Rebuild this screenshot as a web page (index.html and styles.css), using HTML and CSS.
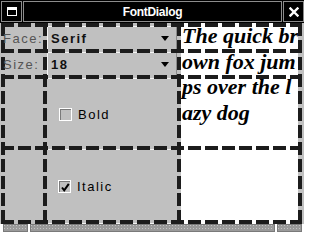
FILE: index.html
```html
<!DOCTYPE html>
<html>
<head>
<meta charset="utf-8">
<title>FontDialog</title>
<link rel="stylesheet" href="styles.css">
</head>
<body>
<div class="window">
  <div class="titlebar">
    <div class="tb-box tb-icon">
      <svg width="10" height="9" viewBox="0 0 10 9"><rect x="0.5" y="0.5" width="9" height="8" fill="none" stroke="#fff"/><rect x="0" y="0" width="10" height="3" fill="#fff"/></svg>
    </div>
    <div class="tb-box tb-title">FontDialog</div>
    <div class="tb-box tb-close">
      <svg width="10" height="10" viewBox="0 0 10 10"><path d="M1.5 1.5L8.5 8.5M8.5 1.5L1.5 8.5" stroke="#fff" stroke-width="2.4" stroke-linecap="square"/></svg>
    </div>
  </div>
  <div class="panel">
    <div class="label face-label">Face:</div>
    <div class="choice face-choice"><span class="choice-text">Serif</span><span class="arrow"></span></div>
    <div class="label size-label">Size:</div>
    <div class="choice size-choice"><span class="choice-text">18</span><span class="arrow"></span></div>
    <div class="check bold-check"><span class="box"></span><span class="check-text">Bold</span></div>
    <div class="check italic-check"><span class="box"><svg width="10" height="10" viewBox="0 0 10 10"><path d="M2 5.5L4.2 8.3L8.8 1.8" fill="none" stroke="#000" stroke-width="2"/></svg></span><span class="check-text">Italic</span></div>
    <div class="preview">
      <div class="pline">The quick br</div>
      <div class="pline">own fox jum</div>
      <div class="pline">ps over the l</div>
      <div class="pline">azy dog</div>
    </div>
    <div class="hline h1"></div>
    <div class="hline h2"></div>
    <div class="hline h3"></div>
    <div class="hline h4"></div>
    <div class="hline h5"></div>
    <div class="vline v1"></div>
    <div class="vline v2"></div>
    <div class="vline v3"></div>
    <div class="vline v4"></div>
  </div>
  <div class="hscroll">
    <div class="seg seg-l"></div>
    <div class="seg seg-m"></div>
    <div class="seg seg-r"></div>
  </div>
</div>
</body>
</html>
```
FILE: styles.css
```css
html, body {
  margin: 0;
  padding: 0;
  background: #ffffff;
}

.window {
  width: 304px;
  height: 233px;
  background: #c0c0c0;
  display: flex;
  flex-direction: column;
  overflow: hidden;
}

.titlebar {
  height: 23px;
  box-sizing: border-box;
  background: #000;
  padding: 1px 0 1px 1px;
  display: flex;
  gap: 1px;
}

.tb-box {
  box-sizing: border-box;
  height: 21px;
  border: 1px solid #8c8c8c;
  display: flex;
  align-items: center;
  justify-content: center;
}

.tb-icon, .tb-close {
  width: 21px;
}

.tb-title {
  flex: 1;
  color: #fff;
  font-family: "Liberation Sans", Arial, sans-serif;
  font-weight: bold;
  font-size: 12px;
  letter-spacing: -0.3px;
}

.panel {
  display: grid;
  grid-template-columns: 4px 38px 4px 130px 4px 117px 4px;
  grid-template-rows: 4px 22px 4px 22px 4px 67px 4px 70px 4px;
  padding-left: 1px;
  background: #c0c0c0;
}

.label {
  grid-column: 1 / 3;
  z-index: 2;
  display: flex;
  align-items: center;
  padding-left: 2px;
  font-family: "Liberation Sans", Arial, sans-serif;
  font-size: 13px;
  letter-spacing: 1.5px;
  color: #555555;
}

.face-label { grid-row: 2; }
.size-label { grid-row: 4; }

.choice {
  grid-column: 4;
  display: flex;
  align-items: center;
  justify-content: space-between;
  padding: 0 7px 0 3px;
  border-left: 1px solid #f4f4f4;
  border-right: 1px solid #8a8a8a;
  font-family: "Liberation Sans", Arial, sans-serif;
  font-weight: bold;
  font-size: 13px;
  letter-spacing: 1.5px;
  color: #111;
}

.face-choice { grid-row: 2; }
.size-choice { grid-row: 4; }

.arrow {
  width: 0;
  height: 0;
  border-left: 4.5px solid transparent;
  border-right: 4.5px solid transparent;
  border-top: 5px solid #000;
}

.check {
  grid-column: 4;
  display: flex;
  align-items: center;
  gap: 6px;
  padding-left: 12px;
  font-family: "Liberation Sans", Arial, sans-serif;
  font-size: 13px;
  letter-spacing: 1.5px;
  color: #000;
}

.bold-check { grid-row: 6; padding-top: 3px; }
.italic-check { grid-row: 8; padding-left: 11px; padding-top: 3px; }

.box {
  box-sizing: border-box;
  width: 13px;
  height: 13px;
  border: 1px solid #fff;
  box-shadow: inset 1px 1px 0 #7a7a7a;
  background: #c0c0c0;
  display: flex;
  align-items: center;
  justify-content: center;
}

.preview {
  grid-column: 6;
  grid-row: 1 / 10;
  background: #fff;
  padding: 0 0 0 1px;
  overflow: hidden;
}

.pline {
  font-family: "Liberation Serif", "Times New Roman", serif;
  font-style: italic;
  font-weight: bold;
  font-size: 22px;
  line-height: 25.5px;
  white-space: nowrap;
  color: #000;
}

.hline {
  grid-column: 1 / -1;
  z-index: 1;
  background:
    repeating-linear-gradient(to right, #1c1c1c 0 13px, transparent 13px 17px),
    linear-gradient(#f4f4f4, #f4f4f4) 46px 100% / 130px 1px no-repeat;
}

.h1 { grid-row: 1; }
.h2 { grid-row: 3; }
.h3 { grid-row: 5; }
.h4 { grid-row: 7; }
.h5 { grid-row: 9; }

.vline {
  grid-row: 1 / -1;
  z-index: 1;
  background: repeating-linear-gradient(to bottom, #1c1c1c 0 13px, transparent 13px 17px);
}

.v1 { grid-column: 1; }
.v2 { grid-column: 3; }
.v3 { grid-column: 5; }
.v4 { grid-column: 7; }

.hscroll {
  height: 9px;
  box-sizing: border-box;
  display: flex;
  gap: 2px;
  padding: 0 0 1px 3px;
  background: #fff;
}

.seg {
  height: 8px;
  background-color: #9a9a9a;
  background-image: radial-gradient(circle, #c4c4c4 0.5px, transparent 0.8px);
  background-size: 3px 3px;
  box-shadow: inset 0 0 0 1px #7a7a7a;
}

.seg-l { width: 25px; }
.seg-m { width: 245px; }
.seg-r { width: 25px; }
```
